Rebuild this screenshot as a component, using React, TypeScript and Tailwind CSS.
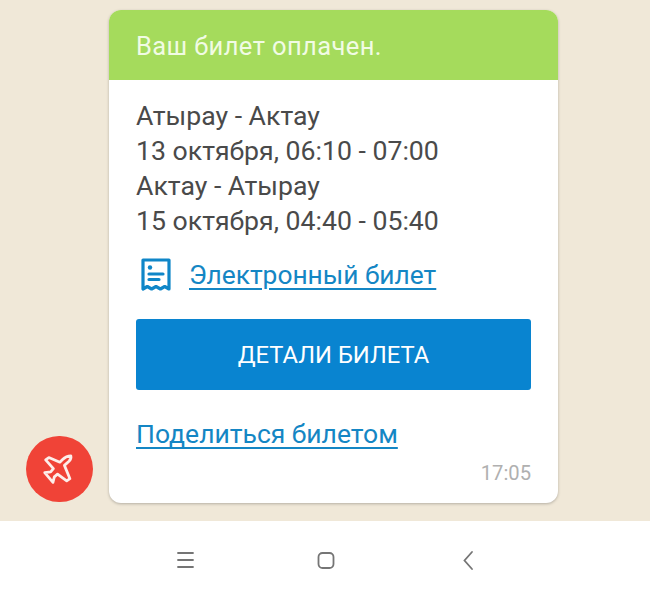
function ReceiptIcon() {
  return (
    <svg width="32" height="36" viewBox="0 0 32 36" fill="none" stroke="#0f86c8" strokeWidth="3.200" strokeLinejoin="round" strokeLinecap="round">
      <path d="M3 3h26v29l-4.300-2.500-4.300 2.500-4.400-2.500-4.400 2.500-4.300-2.500L3 32z" />
      <circle cx="10" cy="10.500" r="2.200" fill="#0f86c8" stroke="none" />
      <path d="M9 17h14M9 22.500h10" />
    </svg>
  );
}

function PlaneIcon() {
  return (
    <svg className="mr-[3px]" width="32" height="33" viewBox="0 0 34 36" fill="none" stroke="#fdeeea" strokeWidth="3" strokeLinejoin="round" strokeLinecap="round">
      <path d="M31 3C27 3 24 5 22 7l-3 3L7 5 3.500 7.500 12 17l-3 3.500-6.500 1L11.500 32l1.500-6 3.500-3 10 7.500 3.500-2.500-6-14.500L29 9c2-2 2.500-4 2-6z" />
    </svg>
  );
}

export default function App() {
  return (
    <div className="flex h-[600px] w-[650px] flex-col overflow-hidden bg-white font-['Roboto',sans-serif]">
      <div className="flex h-[521px] items-end bg-[#f0e8d8] pb-[18px] pl-[26px]">
        <div className="mb-[1px] flex h-[66px] w-[67px] items-center justify-center rounded-full bg-[#f04337]">
          <PlaneIcon />
        </div>
        <div className="ml-[16px] w-[449px] overflow-hidden rounded-[12px] bg-white shadow-[0_1px_3px_rgba(0,0,0,0.25)]">
          <div className="flex h-[70px] items-center bg-[#a5db5c] pt-[3px] pl-[27px] text-[25.500px] tracking-[0.4px] text-[#f1fbe4]">
            Ваш билет оплачен.
          </div>
          <div className="px-[27px] pt-[19px] pb-[18px]">
            <div className="text-[26.650px] leading-[35px] text-[#4a4a4a]">
              <div>Атырау - Актау</div>
              <div>13 октября, 06:10 - 07:00</div>
              <div>Актау - Атырау</div>
              <div>15 октября, 04:40 - 05:40</div>
            </div>
            <div className="mt-[18px] flex items-center gap-[17px] pl-[4px]">
              <ReceiptIcon />
              <span className="text-[26.350px] leading-[34px] text-[#1486c4] underline underline-offset-[4px]">
                Электронный билет
              </span>
            </div>
            <div className="mt-[26px] flex h-[71px] items-center justify-center rounded-[3px] bg-[#0984d0] pt-[3px] text-[23.750px] text-white">
              ДЕТАЛИ БИЛЕТА
            </div>
            <div className="mt-[27px] text-[26.500px] leading-[34px] text-[#1486c4] underline underline-offset-[4px]">
              Поделиться билетом
            </div>
            <div className="mt-[10px] text-right text-[20.200px] leading-[24px] text-[#b0b0b0]">17:05</div>
          </div>
        </div>
      </div>
      <div className="flex flex-1 items-center justify-center pb-[1px]">
        <svg width="330" height="40" viewBox="0 0 330 40" fill="none" stroke="#757575" strokeWidth="1.800" strokeLinecap="round">
          <path d="M18 13h15M18 20h15M18 27h15" />
          <rect x="158.500" y="13" width="15" height="15" rx="4" />
          <path d="M312 12l-7.500 8.500 7.500 8.500" />
        </svg>
      </div>
    </div>
  );
}
